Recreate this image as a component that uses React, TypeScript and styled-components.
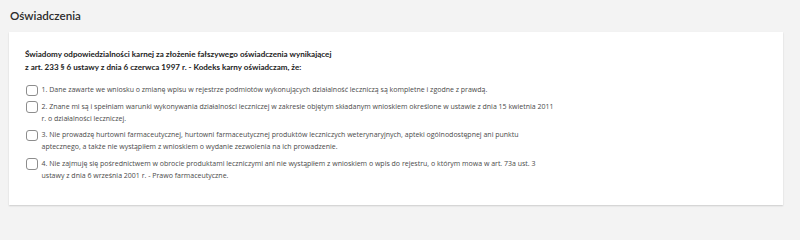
import React from "react"
import styled, { createGlobalStyle } from "styled-components"

const GlobalStyle = createGlobalStyle`
  html, body {
    margin: 0;
    padding: 0;
    background: #f3f3f3;
  }
  body {
    font-family: "Open Sans", "Noto Sans", sans-serif;
    color: #333;
  }
`

const StyledPage = styled.div`
  width: 800px;
  height: 221px;
  box-sizing: border-box;
  padding: 7px 17px 0 9px;
`

const StyledPageTitle = styled.h2`
  margin: 0 0 8px 1px;
  font-family: Lato, "Open Sans", sans-serif;
  font-size: 11.6px;
  line-height: 17px;
  font-weight: 600;
  color: #2b2b2b;
`

const StyledCard = styled.section`
  background: #fff;
  height: 173px;
  box-sizing: border-box;
  padding: 16px 16px 0 16px;
  box-shadow: 0 1px 1.5px rgba(0, 0, 0, 0.16);
`

const StyledLead = styled.p`
  margin: 0 0 10px 0;
  font-family: Lato, "Open Sans", sans-serif;
  font-size: 8.05px;
  line-height: 13px;
  font-weight: 700;
  color: #222;
`

const StyledList = styled.ul`
  list-style: none;
  margin: 0;
  padding: 0;
  display: flex;
  flex-direction: column;
  gap: 4.5px;
`

const StyledItem = styled.li`
  display: flex;
  align-items: flex-start;
  gap: 4px;
`

const StyledCheckbox = styled.input.attrs({ type: "checkbox" })`
  appearance: none;
  flex: none;
  width: 11.5px;
  height: 11.5px;
  margin: 0.5px 0 0 1px;
  box-sizing: border-box;
  border: 1px solid #8d8d8d;
  border-radius: 3px;
  background: #fff;
`

const StyledItemText = styled.label`
  max-width: 514px;
  font-size: 7px;
  line-height: 12px;
  color: #4a4a4a;
`

const statements = [
  "1. Dane zawarte we wniosku o zmianę wpisu w rejestrze podmiotów wykonujących działalność leczniczą są kompletne i zgodne z prawdą.",
  "2. Znane mi są i spełniam warunki wykonywania działalności leczniczej w zakresie objętym składanym wnioskiem określone w ustawie z dnia 15 kwietnia 2011 r. o działalności leczniczej.",
  "3. Nie prowadzę hurtowni farmaceutycznej, hurtowni farmaceutycznej produktów leczniczych weterynaryjnych, apteki ogólnodostępnej ani punktu aptecznego, a także nie wystąpiłem z wnioskiem o wydanie zezwolenia na ich prowadzenie.",
  "4. Nie zajmuję się pośrednictwem w obrocie produktami leczniczymi ani nie wystąpiłem z wnioskiem o wpis do rejestru, o którym mowa w art. 73a ust. 3 ustawy z dnia 6 września 2001 r. - Prawo farmaceutyczne.",
]

const App: React.FC = () => (
  <StyledPage>
    <GlobalStyle />
    <StyledPageTitle>Oświadczenia</StyledPageTitle>
    <StyledCard>
      <StyledLead>
        Świadomy odpowiedzialności karnej za złożenie fałszywego oświadczenia wynikającej
        <br />
        z art. 233 § 6 ustawy z dnia 6 czerwca 1997 r. - Kodeks karny oświadczam, że:
      </StyledLead>
      <StyledList>
        {statements.map((text, i) => (
          <StyledItem key={i}>
            <StyledCheckbox id={`statement-${i}`} />
            <StyledItemText htmlFor={`statement-${i}`}>{text}</StyledItemText>
          </StyledItem>
        ))}
      </StyledList>
    </StyledCard>
  </StyledPage>
)

export default App
